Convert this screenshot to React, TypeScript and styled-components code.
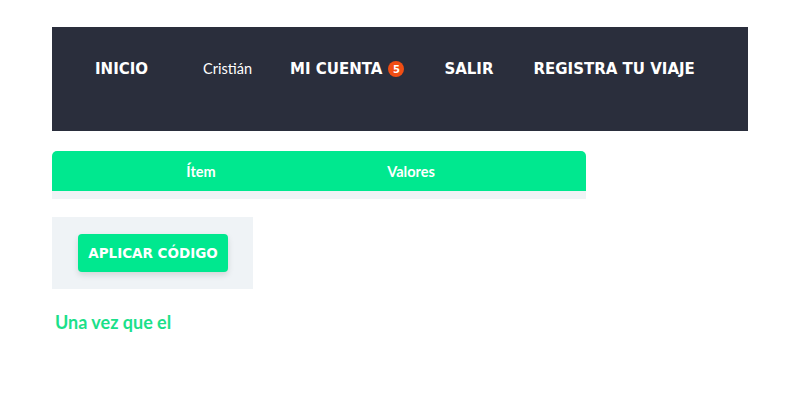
import React from "react";
import styled, { createGlobalStyle } from "styled-components";

const Global = createGlobalStyle`
  html, body { margin: 0; padding: 0; background: #ffffff; }
  body { font-family: "Lato", "Noto Sans", sans-serif; }
`;

const Page = styled.div`
  padding: 27px 52px 0 52px;
  width: 696px;
`;

const Nav = styled.nav`
  height: 104px;
  box-sizing: border-box;
  background: #2a2e3c;
  display: flex;
  align-items: center;
  padding-left: 43px;
  padding-bottom: 20px;
  gap: 40px;
`;

const NavLink = styled.span`
  font-family: "DejaVu Sans", sans-serif;
  font-weight: 700;
  font-size: 15px;
  color: #ffffff;
  display: inline-flex;
  align-items: center;
`;

const User = styled.span`
  font-family: "Lato", "Noto Sans", sans-serif;
  font-size: 14.5px;
  color: #ffffff;
  margin: -2px -2px 0 15px;
`;

const Badge = styled.span`
  display: inline-flex;
  align-items: center;
  justify-content: center;
  width: 16px;
  height: 16px;
  border-radius: 50%;
  background: #f04e14;
  color: #fff;
  font-size: 10px;
  font-weight: 700;
  margin-left: 6px;
`;

const Table = styled.div`
  margin-top: 20px;
  width: 534px;
`;

const HeaderRow = styled.div`
  display: grid;
  grid-template-columns: 298px 122px 1fr;
  height: 40px;
  align-items: center;
  background: #00e88f;
  border-radius: 5px 5px 0 0;
`;

const HeadCell = styled.div`
  text-align: center;
  color: #ffffff;
  font-weight: 700;
  font-size: 14.5px;
  font-family: "Lato", "Noto Sans", sans-serif;
`;

const Strip = styled.div`
  height: 8px;
  background: #f0f3f6;
`;

const CouponBox = styled.div`
  margin-top: 18px;
  width: 201px;
  height: 72px;
  background: #eff3f6;
  display: flex;
  align-items: center;
  padding-left: 26px;
  box-sizing: border-box;
`;

const ApplyButton = styled.button`
  width: 150px;
  height: 38px;
  border: none;
  border-radius: 4px;
  background: #00e88f;
  color: #ffffff;
  font-family: "DejaVu Sans", sans-serif;
  font-weight: 700;
  font-size: 13.5px;
  box-shadow: 0 3px 6px rgba(0, 0, 0, 0.12);
  padding: 0;
  cursor: pointer;
`;

const Note = styled.p`
  margin: 22px 0 0 3px;
  color: #1be08a;
  font-family: "Lato", "Noto Sans", sans-serif;
  font-weight: 700;
  font-size: 18px;
`;

export default function App() {
  return (
    <>
      <Global />
      <Page>
        <Nav>
          <NavLink>INICIO</NavLink>
          <User>Cristián</User>
          <NavLink>
            MI CUENTA<Badge>5</Badge>
          </NavLink>
          <NavLink>SALIR</NavLink>
          <NavLink>REGISTRA TU VIAJE</NavLink>
        </Nav>
        <Table>
          <HeaderRow>
            <HeadCell>Ítem</HeadCell>
            <HeadCell>Valores</HeadCell>
            <HeadCell />
          </HeaderRow>
          <Strip />
        </Table>
        <CouponBox>
          <ApplyButton>APLICAR CÓDIGO</ApplyButton>
        </CouponBox>
        <Note>Una vez que el</Note>
      </Page>
    </>
  );
}
